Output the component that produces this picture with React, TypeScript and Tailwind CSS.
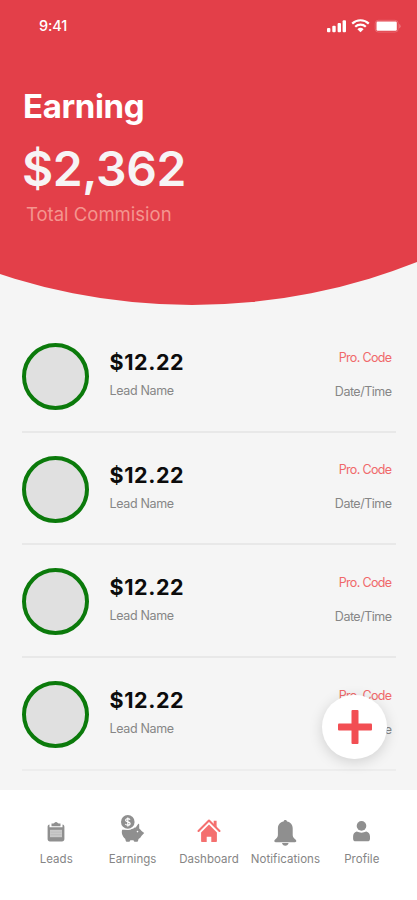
import React from 'react';

interface Lead {
  id: number;
  amount: string;
  name: string;
  code: string;
  date: string;
}

const leads: Lead[] = [1, 2, 3, 4].map((id) => ({
  id,
  amount: '$12.22',
  name: 'Lead Name',
  code: 'Pro. Code',
  date: 'Date/Time',
}));

const StatusBar: React.FC = () => (
  <div className="flex h-[52px] items-center justify-between pl-[39px] pr-[16px] text-white">
    <span className="text-[14.5px] font-medium leading-5 tracking-[-0.1px]">9:41</span>
    <svg width="76" height="14" viewBox="0 0 76 14" fill="currentColor">
      <rect x="2" y="9" width="3.4" height="4.2" rx="1" />
      <rect x="7.3" y="6.8" width="3.4" height="6.4" rx="1" />
      <rect x="12.6" y="4" width="3.4" height="9.2" rx="1" />
      <rect x="17.6" y="1.2" width="3.4" height="12" rx="1" />
      <path d="M27.2 4.6a12 12 0 0 1 16.6 0M30.2 7.8a7.7 7.7 0 0 1 10.6 0" fill="none" stroke="currentColor" strokeWidth="2.2" />
      <path d="M32.4 10.2a4.6 4.6 0 0 1 6.2 0L35.5 13.3z" />
      <rect x="50.2" y="1.3" width="23" height="11.8" rx="3.2" fill="none" stroke="currentColor" strokeOpacity=".2" />
      <rect x="51.5" y="2.6" width="20.3" height="9.2" rx="1.2" />
      <path d="M74.2 5v4.4a2.4 2.4 0 0 0 0-4.4z" opacity=".3" />
    </svg>
  </div>
);

const Header: React.FC = () => (
  <header className="relative h-[320px] shrink-0 overflow-hidden">
    <div className="absolute bottom-[15.5px] left-[-419px] h-[1222px] w-[1222px] rounded-full bg-[#e33f49]" />
    <div className="relative">
      <StatusBar />
      <div className="pl-[23px] pt-[33px]">
        <h1 className="text-[33px] font-bold leading-[42px] tracking-[-0.35px] text-white">Earning</h1>
        <p className="ml-[-1px] mt-[13px] text-[48px] font-semibold leading-[58px] tracking-[-0.4px] text-[#f7f4f5]">$2,362</p>
        <p className="ml-[3px] mt-[4px] text-[18.5px] font-normal leading-6 text-[#f4958f]">Total Commision</p>
      </div>
    </div>
  </header>
);

const LeadRow: React.FC<{ lead: Lead }> = ({ lead }) => (
  <li className="flex h-[112.7px] justify-between border-b-2 border-[#e8e8e8] pt-[23px] last:border-[#ededed]">
    <div className="flex">
      <div className="h-[67px] w-[67px] rounded-full border-4 border-[#0b7a0b] bg-[#e0e0e0]" />
      <div className="ml-[21px] pt-[5px]">
        <p className="text-[21.5px] font-bold leading-7 tracking-[0.6px] text-[#0c0c0c]">{lead.amount}</p>
        <p className="mt-[5px] text-[12.5px] leading-5 tracking-[-0.35px] text-[#868686]">{lead.name}</p>
      </div>
    </div>
    <div className="pr-[4.5px] pt-[4.5px] text-right text-[12.5px] leading-5">
      <p className="tracking-[-0.65px] text-[#f0686a]">{lead.code}</p>
      <p className="mt-[14px] tracking-[-0.5px] text-[#868686]">{lead.date}</p>
    </div>
  </li>
);

const LeadsIcon = () => (
  <svg width="30" height="30" viewBox="0 0 30 30" fill="#8f8f8f">
    <path d="M10.5 8.5h1.7c.6 0 1-.3 1.300-.8a1.800 1.800 0 0 1 3 0c.3.5.7.8 1.300.8h1.700v2.800h-9z" />
    <path d="M8.500 9.600v2.700h13V9.600c1.200.2 1.900 1 1.900 2.200v12.300c0 1.500-.9 2.400-2.400 2.400H9c-1.500 0-2.400-.9-2.400-2.400V11.800c0-1.200.7-2 1.900-2.200z" />
    <rect x="9" y="14.800" width="12" height="7.400" fill="#c9c9c9" />
    <path d="M9.500 16.700h11v.9h-11zM9.500 19.300h11v.9h-11z" fill="#bababa" />
  </svg>
);

const EarningsIcon = () => (
  <svg width="30" height="30" viewBox="0 0 30 30" fill="#8f8f8f">
    <path d="M4.200 14.700h6.300c2.500 0 4.500-.8 6.200-2.200h1l2.500-3.400c.4-.5 1-.3 1 .4v4c1 .7 1.800 1.500 2.400 2.600l2.600 1.800-2.600 2.900c-.7 1.400-1.800 2.500-3.100 3.300l-.5 2c-.1.500-.4.700-.9.700h-2.400c-.5 0-.8-.3-.9-.7l-.3-.9h-3.200l-.3.9c-.1.400-.4.700-.9.700H8.700c-.5 0-.8-.2-.9-.7l-.6-2.300C4.700 21.600 3 18 4.200 14.700z" />
    <circle cx="19.500" cy="16.600" r=".8" fill="#fff" />
    <circle cx="9.800" cy="6.900" r="7.900" fill="#fff" />
    <circle cx="9.800" cy="6.900" r="6.800" />
    <path d="M12 4.800c-.5-.8-1.200-1.100-2.200-1.100-1.300 0-2.200.6-2.200 1.600 0 2.200 4.500 1 4.500 3.200 0 1-.9 1.700-2.300 1.700-1.100 0-2-.4-2.500-1.200M9.800 2.500v8.900" fill="none" stroke="#fff" strokeWidth="1.200" />
  </svg>
);

const DashboardIcon = () => (
  <svg width="30" height="30" viewBox="0 0 30 30" fill="#f4706f">
    <path d="M4.500 16 15 5.500 25.500 16" fill="none" stroke="#f4706f" strokeWidth="2.100" strokeLinecap="round" strokeLinejoin="round" />
    <path d="M19.700 5.800h2.900v6.400l-2.900-2.900z" />
    <path d="M15 9.600 22.900 17.500v8.400c0 .7-.4 1.100-1.100 1.100h-4.500v-5.200h-4.600V27H8.200c-.7 0-1.100-.4-1.100-1.100v-8.400z" />
  </svg>
);

const NotificationsIcon = () => (
  <svg width="30" height="30" viewBox="0 0 30 30" fill="#8f8f8f">
    <path d="M15.300 5c1 0 1.700.6 1.700 1.600 3.400.6 5.700 3.200 5.700 6.700v6.400c0 1.700.6 2.800 2.200 4.200.8.700 1.400 1.300 1.400 2.200 0 .7-.5 1.100-1.300 1.100H5.600c-.8 0-1.300-.4-1.300-1.100 0-.9.600-1.500 1.400-2.200 1.600-1.400 2.200-2.500 2.200-4.200v-6.400c0-3.500 2.300-6.100 5.700-6.700 0-1 .7-1.600 1.700-1.600z" />
    <path d="M12 28.100h6.600c-.3 1.700-1.500 2.600-3.300 2.600s-3-.9-3.300-2.600z" />
  </svg>
);

const ProfileIcon = () => (
  <svg width="30" height="30" viewBox="0 0 30 30" fill="#8f8f8f">
    <circle cx="14.500" cy="10.900" r="4.800" />
    <path d="M9.700 16.600c3 1.500 6.600 1.500 9.600 0 2.300.5 3.700 2.500 3.700 5v2.100c0 1.700-.9 2.600-2.600 2.600H8.700c-1.700 0-2.600-.9-2.600-2.600v-2.100c0-2.500 1.300-4.500 3.600-5z" />
  </svg>
);

const tabs = [
  { label: 'Leads', icon: <LeadsIcon /> },
  { label: 'Earnings', icon: <EarningsIcon /> },
  { label: 'Dashboard', icon: <DashboardIcon /> },
  { label: 'Notifications', icon: <NotificationsIcon /> },
  { label: 'Profile', icon: <ProfileIcon /> },
];

const TabBar: React.FC = () => (
  <nav className="flex h-[110px] shrink-0 bg-white pl-[18px] pr-[17px] pt-[25px]">
    {tabs.map((tab) => (
      <button key={tab.label} className="flex flex-1 basis-0 flex-col items-center">
        <span className="h-[30px] w-[30px] [&>svg]:overflow-visible">{tab.icon}</span>
        <span className="mt-[6px] text-[11.5px] leading-4 tracking-[0.05px] text-[#858585]">{tab.label}</span>
      </button>
    ))}
  </nav>
);

const App: React.FC = () => (
  <div className="relative flex h-[900px] w-[417px] flex-col overflow-hidden bg-[#f5f5f5] font-['Inter',sans-serif]">
    <Header />
    <ul className="h-[470px] shrink-0 pl-[21.5px] pr-[21px]">
      {leads.map((lead) => (
        <LeadRow key={lead.id} lead={lead} />
      ))}
    </ul>
    <TabBar />
    <button
      aria-label="Add lead"
      className="absolute left-[322px] top-[695px] flex h-[64px] w-[65px] items-center justify-center rounded-full bg-white shadow-[0_3px_14px_rgba(0,0,0,0.15)]"
    >
      <svg width="34" height="34" viewBox="0 0 34 34" fill="#f24e53">
        <rect x="13.500" y="0" width="7" height="34" rx="1" />
        <rect x="0" y="13.500" width="34" height="7" rx="1" />
      </svg>
    </button>
  </div>
);

export default App;
